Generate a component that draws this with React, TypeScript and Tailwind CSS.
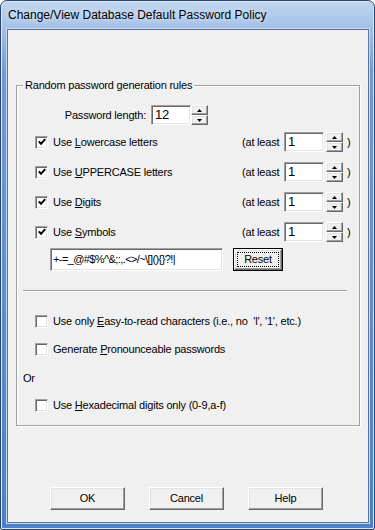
const raised =
  'bg-[#f0f0f0] border border-t-white border-l-white border-r-[#696969] border-b-[#696969] shadow-[inset_-1px_-1px_0_#a0a0a0,inset_1px_1px_0_#e3e3e3]'
const sunken =
  'bg-white border border-t-[#a0a0a0] border-l-[#a0a0a0] border-r-white border-b-white shadow-[inset_1px_1px_0_#696969,inset_-1px_-1px_0_#e3e3e3]'

function Arrow({ up }: { up?: boolean }) {
  return (
    <svg width="5" height="3" viewBox="0 0 5 3">
      <polygon points={up ? '2.5,0 5,3 0,3' : '0,0 5,0 2.5,3'} fill="#000" />
    </svg>
  )
}

function Spin() {
  return (
    <div className="flex flex-col w-[17px] h-[20px] shrink-0">
      <div className={`${raised} h-[10px] flex items-center justify-center`}>
        <Arrow up />
      </div>
      <div className={`${raised} h-[10px] flex items-center justify-center`}>
        <Arrow />
      </div>
    </div>
  )
}

function Check({ on }: { on?: boolean }) {
  return (
    <div className={`${sunken} w-[13px] h-[13px] flex items-center justify-center shrink-0`}>
      {on && (
        <svg width="8" height="8" viewBox="0 0 8 8">
          <path d="M0.8 3.4 L3 5.8 L7.2 1.2" stroke="#000" strokeWidth="2" fill="none" />
        </svg>
      )}
    </div>
  )
}

function CountRow({ label, letter, rest }: { label: string; letter: string; rest: string }) {
  return (
    <div className="flex items-center h-[20px]">
      <div className="w-[225px] pl-[18px] flex items-center">
        <Check on />
        <span className="ml-[5px]">
          {label}
          <u>{letter}</u>
          {rest}
        </span>
      </div>
      <span className="w-[42px]">(at least</span>
      <div className={`${sunken} w-[40px] h-[20px] flex items-center pl-[3px] text-[13px]`}>1</div>
      <div className="ml-[2px]">
        <Spin />
      </div>
      <span className="ml-[4px]">)</span>
    </div>
  )
}

export default function App() {
  return (
    <div className="w-[375px] h-[530px] bg-white font-['Liberation_Sans',Arial,sans-serif] text-black">
      <div className="w-[375px] h-[530px] flex flex-col rounded-t-[7px] rounded-b-[2px] border border-[#2a4670] bg-[linear-gradient(to_bottom,#c0d6f0_0px,#a3c0e6_28px,#6f9bd6_70px,#4d80c6_100%)] shadow-[inset_1px_1px_0_#dbe7f6,inset_-1px_-1px_0_#dbe7f6]">
        <div className="h-[28px] pl-[7px] flex items-center text-[12px] [text-shadow:0_0_6px_#ffffff]">
          Change/View Database Default Password Policy
        </div>

        <div className="ml-[6px] mr-[5px] h-[494px] border border-[#5d7497] bg-[#f0f0f0] shadow-[0_0_0_1px_#c8d8ee] text-[11px] tracking-[-0.2px] flex flex-col">
          <div className="relative ml-[8px] mt-[55px] w-[344px] border border-[#a0a0a0] shadow-[1px_1px_0_#ffffff,inset_1px_1px_0_#ffffff] pt-[19px] pb-[12px]">
            <span className="absolute left-[6px] -top-[8px] px-[2px] bg-[#f0f0f0] leading-[14px]">
              Random password generation rules
            </span>

            <div className="flex items-center h-[20px]">
              <span className="w-[129px] text-right">Password length:</span>
              <div className={`${sunken} ml-[5px] w-[40px] h-[20px] flex items-center pl-[3px] text-[13px]`}>12</div>
              <Spin />
            </div>

            <div className="mt-[7px] flex flex-col gap-[10px]">
              <CountRow label="Use " letter="L" rest="owercase letters" />
              <CountRow label="Use " letter="U" rest="PPERCASE letters" />
              <CountRow label="Use " letter="D" rest="igits" />
              <CountRow label="Use " letter="S" rest="ymbols" />
            </div>

            <div className="mt-[6px] flex items-center h-[23px]">
              <div className={`${sunken} ml-[33px] w-[173px] h-[23px] flex items-center pl-[2px] whitespace-nowrap overflow-hidden tracking-[-0.6px]`}>
                {'+-=_@#$%^&;:,.<>/~\\[](){}?!|'}
              </div>
              <div className="ml-[10px] w-[50px] h-[23px] border border-black">
                <div className={`${raised} w-full h-full flex items-center justify-center`}>
                  <span className="w-[42px] h-[15px] border border-dotted border-black flex items-center justify-center">
                    Reset
                  </span>
                </div>
              </div>
            </div>

            <div className="mt-[19px] ml-[6px] w-[324px] h-[2px] border-t border-t-[#a0a0a0] border-b border-b-white" />

            <div className="mt-[21px] h-[16px] pl-[18px] flex items-center">
              <Check />
              <span className="ml-[5px]">
                Use only <u>E</u>asy-to-read characters (i.e., no &nbsp;'l', '1', etc.)
              </span>
            </div>
            <div className="mt-[12px] h-[16px] pl-[18px] flex items-center">
              <Check />
              <span className="ml-[5px]">
                Generate <u>P</u>ronounceable passwords
              </span>
            </div>
            <div className="mt-[13px] h-[16px] pl-[6px] flex items-center">Or</div>
            <div className="mt-[11px] h-[16px] pl-[18px] flex items-center">
              <Check />
              <span className="ml-[5px]">
                Use <u>H</u>exadecimal digits only (0-9,a-f)
              </span>
            </div>
          </div>

          <div className="mt-[61px] ml-[42px] flex gap-[24px]">
            {['OK', 'Cancel', 'Help'].map((b) => (
              <div key={b} className={`${raised} w-[75px] h-[23px] flex items-center justify-center`}>
                {b}
              </div>
            ))}
          </div>
        </div>
      </div>
    </div>
  )
}
